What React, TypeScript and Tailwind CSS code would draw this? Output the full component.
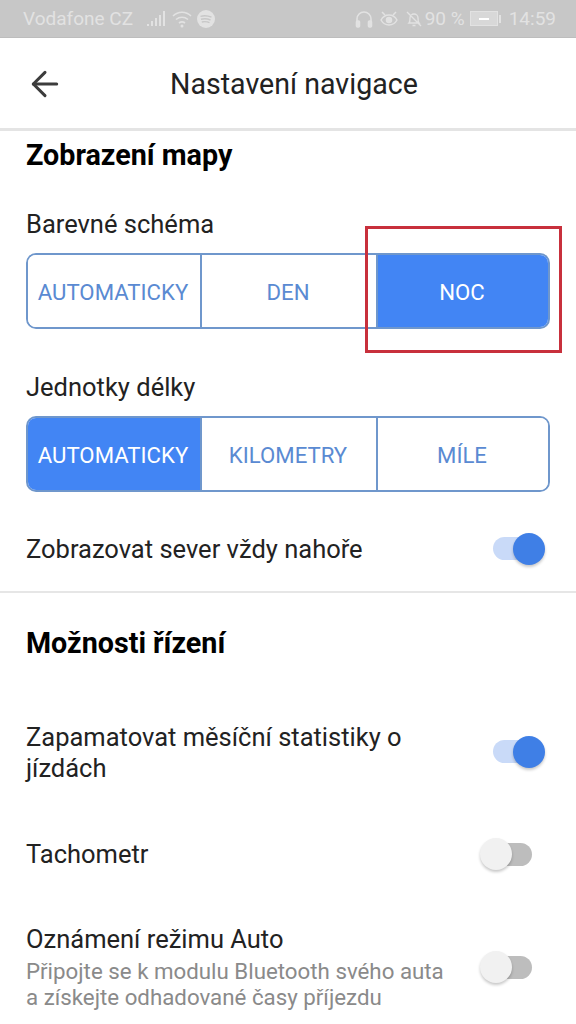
import { ArrowLeft } from "lucide-react";

const font = "font-['Roboto',sans-serif]";
const statusColor = "#e2e2e2";

function StatusLeft() {
  return (
    <div className="flex items-center">
      <span className="text-[19px] leading-none w-[124px] shrink-0 whitespace-nowrap">Vodafone CZ</span>
      <div className="flex items-end gap-[2px] h-[15px] w-[20px] shrink-0">
        <div className="w-[2px] h-[2px] bg-[#e2e2e2]" />
        <div className="w-[2px] h-[5px] bg-[#e2e2e2]" />
        <div className="w-[2px] h-[8px] bg-[#e2e2e2]" />
        <div className="w-[2px] h-[11px] bg-[#e2e2e2]" />
        <div className="w-[2px] h-[15px] bg-[#e2e2e2]" />
      </div>
      <svg width="21" height="20" viewBox="0 0 21 20" className="ml-[5px] shrink-0" fill="none" stroke={statusColor} strokeWidth="1.6">
        <path d="M1 7c5-5 13-5 18 0M4 10.500c3.500-3 8.500-3 12 0M7 14c2-1.500 4-1.500 6 0" />
        <circle cx="10" cy="17" r="1.500" fill={statusColor} stroke="none" />
      </svg>
      <svg width="18" height="18" viewBox="0 0 18 18" className="ml-[4px] shrink-0">
        <circle cx="9" cy="9" r="9" fill={statusColor} />
        <path d="M3.500 6.300c3.500-1 7.500-.7 11 .9M4 9.200c3.200-.8 6.500-.5 9.500.8M4.800 12c2.600-.6 5.400-.4 7.700.7" fill="none" stroke="#c7c7c7" strokeWidth="1.400" />
      </svg>
    </div>
  );
}

function StatusRight() {
  return (
    <div className="flex items-center">
      <svg width="18" height="18" viewBox="0 0 18 18" fill="none" stroke={statusColor} strokeWidth="1.6">
        <path d="M2 12V9a7 7 0 0 1 14 0v3" />
        <rect x="1.500" y="11" width="3" height="6" rx="1" fill={statusColor} />
        <rect x="13.500" y="11" width="3" height="6" rx="1" fill={statusColor} />
      </svg>
      <svg width="20" height="18" viewBox="0 0 20 18" className="ml-[6px]" fill="none" stroke={statusColor} strokeWidth="1.500">
        <path d="M2 10c2-3.500 5-5 8-5s6 1.500 8 5c-2 3.500-5 5-8 5s-6-1.500-8-5z" />
        <circle cx="10" cy="10" r="2.500" fill={statusColor} />
        <path d="M3 2l3 3M17 2l-3 3" />
      </svg>
      <svg width="18" height="18" viewBox="0 0 18 18" className="ml-[6px]" fill="none" stroke={statusColor} strokeWidth="1.400">
        <path d="M4 13c1-1 1-2 1-5a4 4 0 0 1 8 0c0 3 0 4 1 5zM7.500 15.500h3M2 2l14 14" />
      </svg>
      <span className="ml-[2px] text-[19px] leading-none whitespace-nowrap">90 %</span>
      <div className="ml-[5px] flex items-center">
        <div className="w-[28px] h-[15px] border border-[#e2e2e2] flex items-center justify-center bg-[#d8d8d8]">
          <div className="w-[10px] h-[2px] bg-white" />
        </div>
        <div className="w-[2px] h-[8px] ml-[1px] bg-[#e2e2e2]" />
      </div>
      <span className="ml-[8px] text-[19px] leading-none">14:59</span>
    </div>
  );
}

function StatusBar() {
  return (
    <div className="h-[38px] bg-[#c7c7c7] border-b border-[#bdbdbd] flex items-center justify-between pl-[23px] pr-[20px] text-[#e2e2e2]">
      <StatusLeft />
      <StatusRight />
    </div>
  );
}

function Segmented({ options, active }: { options: string[]; active: number }) {
  return (
    <div className="mx-[26px] h-[76px] grid grid-cols-[172px_176px_1fr] border-2 border-[#6f97cc] rounded-[10px] overflow-hidden">
      {options.map((o, i) => (
        <div
          key={o}
          className={
            "flex items-center justify-center pt-[3px] pr-[2px] text-[22.2px] " +
            (i > 0 ? "border-l-2 border-[#6f97cc] " : "") +
            (i === active ? "bg-[#4285f4] text-white" : "bg-white text-[#5a8ad2]")
          }
        >
          {o}
        </div>
      ))}
    </div>
  );
}

function Toggle({ on }: { on: boolean }) {
  if (on) {
    return (
      <div className="relative w-[52px] h-[36px] shrink-0">
        <div className="absolute left-0 right-[5px] top-[6px] h-[23px] rounded-full bg-[#c9daf8]" />
        <div className="absolute top-[2px] right-0 w-[32px] h-[32px] rounded-full bg-[#3f7fe6] shadow-[0_2px_3px_rgba(0,0,0,0.22)]" />
      </div>
    );
  }
  return (
    <div className="relative w-[52px] h-[36px] shrink-0 -translate-x-[13px]">
      <div className="absolute left-[14px] right-0 top-[7px] h-[23px] rounded-full bg-[#bdbdbd]" />
      <div className="absolute top-[2px] left-0 w-[32px] h-[32px] rounded-full bg-[#f1f1f1] shadow-[0_2px_3px_rgba(0,0,0,0.22)]" />
    </div>
  );
}

export default function App() {
  return (
    <div className={`relative w-[576px] h-[1024px] overflow-hidden bg-white ${font}`}>
      <StatusBar />

      <div className="h-[93px] flex items-center border-b-[3px] border-[#e4e4e4] pt-[2px]">
        <ArrowLeft className="ml-[25px] text-[#3c3c3c]" size={40} strokeWidth={1.8} />
        <div className="ml-[105px] text-[28.6px] text-[#222] whitespace-nowrap">Nastavení navigace</div>
      </div>

      <h2 className="mt-[8px] ml-[26px] text-[28.7px] leading-[32px] font-bold text-black">Zobrazení mapy</h2>

      <div className="mt-[37px] ml-[26px] text-[25.5px] leading-[32px] text-[#222]">Barevné schéma</div>
      <div className="mt-[13px]">
        <Segmented options={["AUTOMATICKY", "DEN", "NOC"]} active={2} />
      </div>

      <div className="mt-[42px] ml-[26px] text-[25.5px] leading-[32px] text-[#222]">Jednotky délky</div>
      <div className="mt-[13px]">
        <Segmented options={["AUTOMATICKY", "KILOMETRY", "MÍLE"]} active={0} />
      </div>

      <div className="mt-[39px] pl-[26px] pr-[31px] flex items-center justify-between h-[36px]">
        <div className="text-[25.5px] text-[#222]">Zobrazovat sever vždy nahoře</div>
        <Toggle on />
      </div>

      <div className="mt-[24px] h-[2px] bg-[#e6e6e6]" />

      <h2 className="mt-[34px] ml-[26px] text-[28.7px] leading-[32px] font-bold text-black">Možnosti řízení</h2>

      <div className="mt-[63px] pl-[26px] pr-[31px] flex items-start justify-between">
        <div className="w-[420px] text-[25.5px] leading-[31px] text-[#222]">Zapamatovat měsíční statistiky o jízdách</div>
        <div className="mt-[12px]"><Toggle on /></div>
      </div>

      <div className="mt-[52px] pl-[26px] pr-[31px] flex items-center justify-between h-[36px]">
        <div className="text-[25.5px] text-[#222]">Tachometr</div>
        <Toggle on={false} />
      </div>

      <div className="mt-[52px] pl-[26px] pr-[31px] flex items-start justify-between">
        <div>
          <div className="text-[25.5px] leading-[31px] text-[#222]">Oznámení režimu Auto</div>
          <div className="mt-[3px] w-[430px] text-[22.3px] leading-[26px] text-[#8a8a8a]">Připojte se k modulu Bluetooth svého auta a získejte odhadované časy příjezdu</div>
        </div>
        <div className="mt-[25px]"><Toggle on={false} /></div>
      </div>

      {/* red highlight drawn over the screenshot */}
      <div className="absolute left-[365px] top-[226px] w-[197px] h-[127px] border-[3px] border-[#c8303c]" />
    </div>
  );
}
